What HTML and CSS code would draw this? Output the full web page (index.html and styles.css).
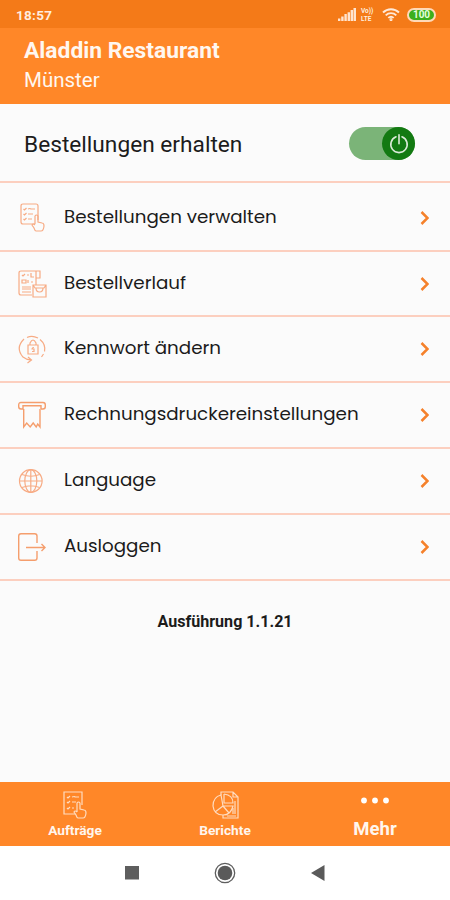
FILE: index.html
```html
<!DOCTYPE html>
<html lang="de">
<head>
  <meta charset="UTF-8" />
  <meta name="viewport" content="width=device-width, initial-scale=1.0">
  <title>Aladdin Restaurant</title>
  <link rel="stylesheet" href="styles.css">
</head>
<body>
  <div class="status-bar">
    <span class="time">18:57</span>
    <div class="status-icons">
      <svg width="18" height="13" viewBox="0 0 18 13" fill="#ffe4cf">
        <path d="M0 10.5h2.400V13H0zM3.200 8.500h2.400V13H3.200zM6.400 6h2.400v7H6.400zM9.600 4.200H12V13H9.600zM12.600 2H15v11h-2.400zM15.500 0H18v13h-2.500z"/>
      </svg>
      <div class="volte"><span>Vo))</span><span>LTE</span></div>
      <svg class="wifi" width="18" height="13" viewBox="0 0 18 13" fill="none" stroke="#ffe9d8" stroke-width="1.9">
        <path d="M1 4.500a11.500 11.500 0 0 1 16 0M3.700 7.300a7.500 7.500 0 0 1 10.600 0M6.300 9.900a4 4 0 0 1 5.400 0"/>
        <circle cx="9" cy="11.600" r="0.6"/>
      </svg>
      <span class="battery">100</span>
    </div>
  </div>

  <header>
    <h1>Aladdin Restaurant</h1>
    <p>Münster</p>
  </header>

  <main>
    <div class="receive">
      <span>Bestellungen erhalten</span>
      <div class="toggle">
        <div class="knob">
          <svg width="20" height="20" viewBox="0 0 20 20" fill="none" stroke="#dcebd9" stroke-width="1.6" stroke-linecap="round">
            <path d="M7 2.800a8.200 8.200 0 1 0 6 0M10 .8v9"/>
          </svg>
        </div>
      </div>
    </div>

    <nav class="menu">
      <a href="#" class="menu-item">
        <svg class="icon" viewBox="0 0 28 28">
          <path d="M17 20H5q-2 0-2-2V2q0-2 2-2h13q2 0 2 2v14"/>
          <path d="M5.500 5l1 1 2-2M10 5q2-1 3 0h4M5.500 10l1 1 2-2M10 10h5M5.500 15l1 1 2-2M10 15h4"/>
          <path d="M17 20v-8q1.500-2 3 0v6l4 1q2 0 2 3-.5 5-3 5h-5q-1 0-2-3l-2-3q1-2 3 0"/>
        </svg>
        <span>Bestellungen verwalten</span>
        <svg class="chevron" viewBox="0 0 9 14"><path d="M1.500 1L7.500 7l-6 6"/></svg>
      </a>
      <a href="#" class="menu-item">
        <svg class="icon" viewBox="0 0 28 28">
          <path d="M14 25H3q-2 0-2-2V3q0-2 2-2h19v7h-4M18 1v14"/>
          <path d="M4 5l1 1 2-2M9 5h2M13 3v4h3M4 10h4v3H4zM10 10v3M13 12h2M4 17h9M4 19h9M4 22h9"/>
          <path d="M15 15h13v12H15zM15 15l2 3h9l2-3M18 18q0 4 3.500 4t3.500-4"/>
        </svg>
        <span>Bestellverlauf</span>
        <svg class="chevron" viewBox="0 0 9 14"><path d="M1.500 1L7.500 7l-6 6"/></svg>
      </a>
      <a href="#" class="menu-item">
        <svg class="icon" viewBox="0 0 28 28">
          <path d="M9 2.500q5-2.500 11 .5M22 4.500q6 5 4.500 12M25.500 19l-2 3M6 4q-9 9-1 18 3 2.500 8 3M10 22l3.500 3-4 3"/>
          <path d="M10 10h10v9H10zM12 10V8q3-6 6 0v2M16 12.500q-2 0-2 1.500h2v2.500h-2"/>
        </svg>
        <span>Kennwort ändern</span>
        <svg class="chevron" viewBox="0 0 9 14"><path d="M1.500 1L7.500 7l-6 6"/></svg>
      </a>
      <a href="#" class="menu-item">
        <svg class="icon receipt" viewBox="0 0 28 28">
          <path d="M5 8H3Q.7 8 .7 5.500V4Q.7 1.500 3 1.500h22q2.300 0 2.300 2.500v1.500Q27.300 8 25 8h-2M5 8V4.700h18V8"/>
          <path d="M5.700 8v18l3-4 3.500 4 3-4 3 4 1.500-3 2.300 3V8"/>
        </svg>
        <span>Rechnungsdruckereinstellungen</span>
        <svg class="chevron" viewBox="0 0 9 14"><path d="M1.500 1L7.500 7l-6 6"/></svg>
      </a>
      <a href="#" class="menu-item">
        <svg class="icon" viewBox="0 0 28 28">
          <circle cx="12.800" cy="14" r="11.300"/>
          <ellipse cx="12.800" cy="14" rx="6" ry="11.300"/>
          <path d="M12.800 2.700v22.600M1.500 14h22.600M4 7.500q9 3.500 17.600 0M4 20.500q9-3.500 17.600 0"/>
        </svg>
        <span>Language</span>
        <svg class="chevron" viewBox="0 0 9 14"><path d="M1.500 1L7.500 7l-6 6"/></svg>
      </a>
      <a href="#" class="menu-item">
        <svg class="icon logout" viewBox="0 0 28 28">
          <path d="M19 10V3q0-2.300-2.300-2.300H3Q.7.700.7 3v22q0 2.300 2.300 2.300h13.700Q19 27.300 19 25v-7M8 14.500h19M23.500 11l3.500 3.500-3.500 3.500"/>
        </svg>
        <span>Ausloggen</span>
        <svg class="chevron" viewBox="0 0 9 14"><path d="M1.500 1L7.500 7l-6 6"/></svg>
      </a>
    </nav>

    <p class="version">Ausführung 1.1.21</p>
  </main>

  <footer class="tabs">
    <a href="#" class="tab">
      <svg class="tab-icon" viewBox="0 0 28 28">
        <path d="M14 23H3V1h18v13"/>
        <path d="M6 6l1 1 2-2M11 6q3-1 3 0h4M6 11l1 1 2-2M11 11h4M6 17l1 1 2-2M11 17h2"/>
        <path d="M16 21v-9q1.500-2 3 0v6l4 1q2 0 2 3-.5 5-3 5h-5q-1 0-2-3l-2-3q1-2 3 0"/>
      </svg>
      <span>Aufträge</span>
    </a>
    <a href="#" class="tab">
      <svg class="tab-icon" viewBox="0 0 28 28">
        <path d="M10 4q-8 2-8 11 1 9 10 9 8 0 10-9H12zM12 15L4 21M12 15l6 7M10 4l2 11"/>
        <path d="M10 4V1h12l5 5v21H12v-3M22 1v5h5M13 3v9h9q0-8-9-9M24 10v13M22 17v6M16 25h9"/>
      </svg>
      <span>Berichte</span>
    </a>
    <a href="#" class="tab active">
      <svg class="dots" width="28" height="7" viewBox="0 0 28 7" fill="#fff">
        <circle cx="3" cy="3.500" r="2.900"/><circle cx="14" cy="3.500" r="2.900"/><circle cx="25" cy="3.500" r="2.900"/>
      </svg>
      <span>Mehr</span>
    </a>
  </footer>

  <div class="system-nav">
    <svg width="14" height="14" viewBox="0 0 14 14"><path fill="#5e5e5e" d="M0 0h14v13.500H0z"/></svg>
    <svg width="22" height="22" viewBox="0 0 22 22">
      <circle cx="11" cy="11" r="9.700" fill="none" stroke="#5e5e5e" stroke-width="1.300"/>
      <circle cx="11" cy="11" r="7.300" fill="#5a5a5a"/>
    </svg>
    <svg width="14" height="16" viewBox="0 0 14 16"><path fill="#5a5a5a" d="M0 8L13.500 0v16z"/></svg>
  </div>
</body>
</html>
```
FILE: styles.css
```css
* {
  box-sizing: border-box;
  margin: 0;
  padding: 0;
}

body {
  font-family: Roboto, sans-serif;
  display: flex;
  flex-direction: column;
  height: 900px;
  background-color: #fbfbfb;
}

a {
  text-decoration: none;
}

.status-bar {
  height: 28px;
  background-color: #f47a18;
  color: #ffeddf;
  display: flex;
  align-items: center;
  justify-content: space-between;
  padding: 1px 14px 0 16px;
}

.time {
  font-size: 13.5px;
  font-weight: 700;
  letter-spacing: 0.3px;
}

.status-icons {
  display: flex;
  align-items: center;
}

.volte {
  display: flex;
  flex-direction: column;
  width: 14px;
  margin: 0 7px 0 5px;
  font-size: 6.5px;
  line-height: 8px;
  font-weight: 700;
}

.wifi {
  margin-right: 7px;
}

.battery {
  width: 29px;
  height: 14px;
  border: 2px solid #ffd9b8;
  border-radius: 7px;
  background-color: #3caf1c;
  color: #e4ffdc;
  font-size: 10px;
  line-height: 10px;
  font-weight: 700;
  text-align: center;
}

header {
  height: 76px;
  padding: 9px 24px 0;
  background-color: #ff8728;
  color: #fff7f0;
}

header h1 {
  font-size: 22.8px;
  line-height: 28px;
  font-weight: 700;
}

header p {
  font-size: 20.5px;
  line-height: 28px;
  margin-top: 1px;
}

main {
  flex: 1;
}

.receive {
  height: 79px;
  padding: 0 35px 0 24px;
  display: flex;
  align-items: center;
  justify-content: space-between;
  border-bottom: 2px solid #fccfbf;
  font-size: 22.7px;
  color: #1c1c1c;
}

.receive span {
  padding-top: 4px;
}

.toggle {
  width: 66px;
  height: 33px;
  margin-top: 2px;
  border-radius: 17px;
  background-color: #7bb478;
  display: flex;
  justify-content: flex-end;
}

.knob {
  width: 33px;
  height: 33px;
  border-radius: 50%;
  background-color: #137a12;
  display: flex;
  align-items: center;
  justify-content: center;
}

.menu {
  padding-top: 2px;
}

.menu-item {
  height: 66px;
  padding: 0 21px 0 18px;
  display: flex;
  align-items: center;
  border-bottom: 2px solid #fccfbf;
  color: #1b1b1b;
  font-family: Poppins, Inter, sans-serif;
  font-size: 18.3px;
}

.menu-item:first-child {
  height: 67px;
}

.menu-item:nth-child(2) {
  height: 65px;
}

.menu-item span {
  flex: 1;
  padding-bottom: 3px;
}

.icon {
  width: 28px;
  height: 28px;
  margin-right: 18px;
  fill: none;
  stroke: #f7ab84;
  stroke-width: 1.2;
  overflow: visible;
}

.receipt,
.logout {
  stroke: #f59e6d;
  stroke-width: 1.4;
}

.chevron {
  width: 9px;
  height: 14px;
  fill: none;
  stroke: #f5812b;
  stroke-width: 2.5;
}

.version {
  margin-top: 31px;
  text-align: center;
  font-size: 16.1px;
  line-height: 20px;
  font-weight: 700;
  color: #1b1b1b;
}

.tabs {
  height: 64px;
  background-color: #ff8728;
  display: grid;
  grid-template-columns: repeat(3, 1fr);
}

.tab {
  display: flex;
  flex-direction: column;
  align-items: center;
  padding-top: 9px;
  color: #fff6ee;
  font-size: 13.7px;
  line-height: 16px;
  font-weight: 700;
}

.tab-icon {
  width: 28px;
  height: 28px;
  margin-bottom: 3px;
  fill: none;
  stroke: #ffdcc0;
  stroke-width: 1.2;
}

.tab.active {
  padding-top: 15px;
  font-size: 18.5px;
  line-height: 22px;
}

.dots {
  margin-bottom: 14px;
}

.system-nav {
  height: 54px;
  background-color: #fff;
  display: flex;
  align-items: center;
  justify-content: center;
  gap: 75px;
}
```
